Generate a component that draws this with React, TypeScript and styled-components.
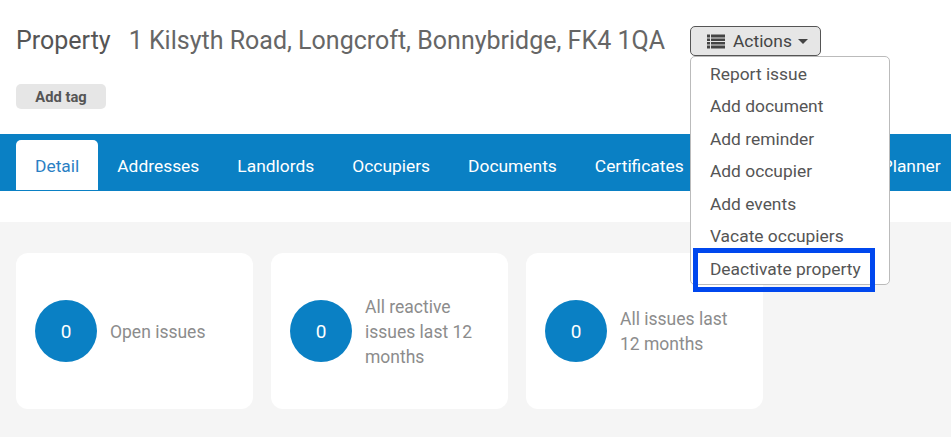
import styled, { createGlobalStyle } from "styled-components";

const tabs = ["Detail", "Addresses", "Landlords", "Occupiers", "Documents", "Certificates"];
const actions = ["Report issue", "Add document", "Add reminder", "Add occupier", "Add events", "Vacate occupiers", "Deactivate property"];
const stats = [
  { count: 0, label: "Open issues" },
  { count: 0, label: "All reactive issues last 12 months" },
  { count: 0, label: "All issues last 12 months" },
];

function ListIcon() {
  return (
    <svg width="18" height="15" viewBox="0 0 18 15" fill="#444">
      <rect x="0" y="0.5" width="3" height="3" />
      <rect x="4" y="0.5" width="14" height="3" />
      <rect x="0" y="4.5" width="3" height="2.5" />
      <rect x="4" y="4.5" width="14" height="2.5" />
      <rect x="0" y="8" width="3" height="2.5" />
      <rect x="4" y="8" width="14" height="2.5" />
      <rect x="0" y="11.5" width="3" height="3" />
      <rect x="4" y="11.5" width="14" height="3" />
    </svg>
  );
}

export default function App() {
  return (
    <Page>
      <GlobalStyle />
      <Header>
        <TitleRow>
          <Title>Property</Title>
          <Address>1 Kilsyth Road, Longcroft, Bonnybridge, FK4 1QA</Address>
          <ActionsWrap>
            <ActionsButton>
              <ListIcon />
              Actions
              <Caret />
            </ActionsButton>
            <Menu>
              {actions.map((a) => (
                <MenuItem key={a}>{a}</MenuItem>
              ))}
              <Highlight />
            </Menu>
          </ActionsWrap>
        </TitleRow>
        <TagButton>Add tag</TagButton>
      </Header>
      <TabBar>
        {tabs.map((t, i) => (
          <Tab key={t} $active={i === 0}>
            {t}
          </Tab>
        ))}
        <HiddenTab />
        <Tab>Planner</Tab>
      </TabBar>
      <Content>
        {stats.map((s) => (
          <Card key={s.label}>
            <Circle>{s.count}</Circle>
            <Label>{s.label}</Label>
          </Card>
        ))}
      </Content>
    </Page>
  );
}

const GlobalStyle = createGlobalStyle`
  html, body {
    margin: 0;
    padding: 0;
    background: #fff;
    overflow: hidden;
  }
`;

const Page = styled.div`
  width: 951px;
  height: 437px;
  overflow: hidden;
  font-family: Roboto, "Liberation Sans", sans-serif;
  color: #555;
`;
const Header = styled.div`
  height: 134px;
  padding: 25px 16px 0;
  box-sizing: border-box;
`;
const TitleRow = styled.div`
  display: flex;
  align-items: center;
  height: 30px;
`;
const Title = styled.div`
  font-size: 25px;
  margin-right: 18px;
`;
const Address = styled.div`
  font-size: 25px;
  color: #666;
  margin-right: 25px;
  white-space: nowrap;
`;
const ActionsWrap = styled.div`
  position: relative;
  top: 1px;
`;
const ActionsButton = styled.div`
  width: 131px;
  height: 30px;
  box-sizing: border-box;
  padding-left: 4px;
  display: flex;
  align-items: center;
  justify-content: center;
  gap: 8px;
  background: #e6e6e6;
  border: 1px solid #555;
  border-radius: 5px;
  font-size: 17.4px;
  color: #444;
`;
const Caret = styled.span`
  width: 0;
  height: 0;
  border-left: 5px solid transparent;
  border-right: 5px solid transparent;
  border-top: 5px solid #444;
  margin-left: -2px;
`;
const Menu = styled.div`
  position: absolute;
  top: 30px;
  left: 0;
  width: 200px;
  height: 229px;
  box-sizing: border-box;
  padding: 0.5px 0;
  background: #fff;
  border: 1px solid #bbb;
  border-radius: 5px;
  z-index: 2;
`;
const MenuItem = styled.div`
  height: 32.5px;
  line-height: 32.5px;
  padding-left: 19px;
  font-size: 17.4px;
  color: #555;
  white-space: nowrap;
`;
const Highlight = styled.div`
  position: absolute;
  left: 2px;
  top: 191px;
  width: 182px;
  height: 44px;
  box-sizing: border-box;
  border: 5px solid #0047ee;
`;
const TagButton = styled.div`
  width: 90px;
  height: 25px;
  margin-top: 29px;
  padding-top: 1px;
  box-sizing: border-box;
  display: flex;
  align-items: center;
  justify-content: center;
  background: #e6e6e6;
  border-radius: 5px;
  font-size: 14.7px;
  font-weight: 700;
  color: #555;
`;
const TabBar = styled.div`
  height: 57px;
  box-sizing: border-box;
  padding: 6px 0 1px 16px;
  display: flex;
  background: #0a80c4;
  overflow: hidden;
`;
const Tab = styled.div<{ $active?: boolean }>`
  flex: none;
  padding: 2px 19px 0;
  display: flex;
  align-items: center;
  font-size: 17.4px;
  white-space: nowrap;
  border-radius: 5px 5px 0 0;
  color: ${(p) => (p.$active ? "#2a7fc4" : "#fff")};
  background: ${(p) => (p.$active ? "#fff" : "transparent")};
`;
const HiddenTab = styled.div`
  flex: none;
  width: 160px;
`;
const Content = styled.div`
  margin-top: 31px;
  height: 215px;
  box-sizing: border-box;
  padding: 31px 16px 0;
  display: flex;
  gap: 18.5px;
  background: #f5f5f5;
`;
const Card = styled.div`
  width: 236.5px;
  height: 156px;
  box-sizing: border-box;
  padding: 0 19px;
  display: flex;
  align-items: center;
  gap: 13px;
  background: #fff;
  border-radius: 12px;
`;
const Circle = styled.div`
  flex: none;
  width: 62px;
  height: 62px;
  border-radius: 50%;
  display: flex;
  align-items: center;
  justify-content: center;
  background: #0a80c4;
  color: #fff;
  font-size: 19px;
`;
const Label = styled.div`
  font-size: 17.5px;
  line-height: 25px;
  padding-top: 2px;
  color: #8c8c8c;
`;
